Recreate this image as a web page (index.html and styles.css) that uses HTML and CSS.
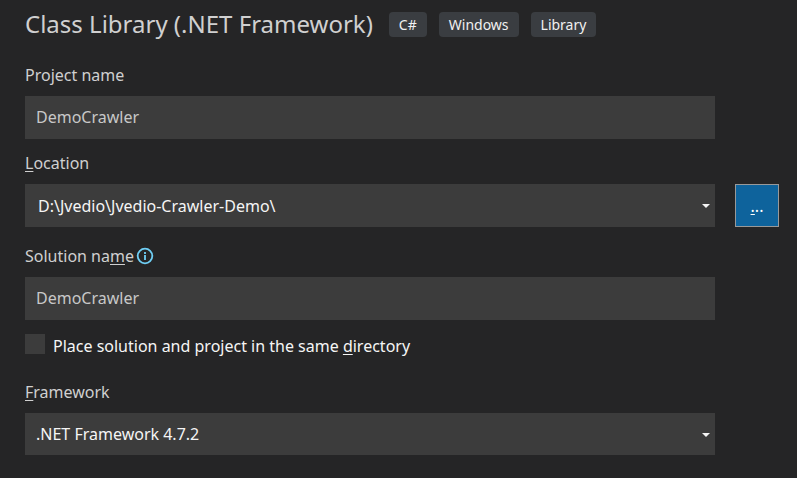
FILE: index.html
```html
<!DOCTYPE html>
<html lang="en">
<head>
<meta charset="utf-8">
<title>Configure your new project</title>
<link rel="stylesheet" href="styles.css">
</head>
<body>
<form class="project">
  <header class="heading">
    <h1 class="title">Class Library (.NET Framework)</h1>
    <ul class="tags">
      <li class="tag">C#</li>
      <li class="tag">Windows</li>
      <li class="tag">Library</li>
    </ul>
  </header>

  <div class="field">
    <label class="label" for="project-name">Project name</label>
    <input class="control" id="project-name" type="text" value="DemoCrawler">
  </div>

  <div class="field field-location">
    <label class="label" for="location"><u>L</u>ocation</label>
    <div class="row">
      <div class="picker">
        <select class="control control-path" id="location">
          <option>D:\Jvedio\Jvedio-Crawler-Demo\</option>
        </select>
        <svg class="arrow" viewBox="0 0 8 4" aria-hidden="true"><path d="M0 0h8L4 4z"/></svg>
      </div>
      <button class="browse" type="button"><u>.</u>..</button>
    </div>
  </div>

  <div class="field field-solution">
    <div class="label-row">
      <label class="label" for="solution-name">Solution na<u>m</u>e</label>
      <svg class="info" viewBox="0 0 18 18" aria-hidden="true">
        <circle cx="9" cy="9" r="7.3"/>
        <path d="M9 8v5M9 5v2"/>
      </svg>
    </div>
    <input class="control" id="solution-name" type="text" value="DemoCrawler">
  </div>

  <div class="check">
    <input class="box" id="same-directory" type="checkbox">
    <label class="check-label" for="same-directory">Place solution and project in the same <u>d</u>irectory</label>
  </div>

  <div class="field">
    <label class="label" for="framework"><u>F</u>ramework</label>
    <div class="picker">
      <select class="control control-bright" id="framework">
        <option>.NET Framework 4.7.2</option>
      </select>
      <svg class="arrow" viewBox="0 0 8 4" aria-hidden="true"><path d="M0 0h8L4 4z"/></svg>
    </div>
  </div>
</form>
</body>
</html>
```
FILE: styles.css
```css
* {
  box-sizing: border-box;
}

body {
  margin: 0;
  background: #252526;
  color: #d0d0d0;
  font: 16px/22px "Noto Sans", "Open Sans", sans-serif;
}

u {
  text-decoration-thickness: 1px;
  text-underline-offset: 2px;
}

.project {
  padding: 7px 82px 0 25px;
}

.heading {
  display: flex;
  align-items: center;
  gap: 16px;
  margin-bottom: 23px;
}

.title {
  margin: 0;
  font-size: 24px;
  font-weight: 400;
  line-height: 34px;
  white-space: nowrap;
}

.tags {
  display: flex;
  gap: 12px;
  margin: 0;
  padding: 0;
  list-style: none;
}

.tag {
  padding: 2px 10px;
  border-radius: 4px;
  background: #3a3d41;
  color: #f0f0f0;
  font-size: 14px;
  line-height: 21px;
}

.field {
  margin-bottom: 13px;
}

.field-location {
  margin-bottom: 18px;
}

.field-solution {
  margin-bottom: 14px;
}

.label,
.label-row {
  display: block;
  height: 22px;
  margin-bottom: 10px;
}

.label-row {
  display: flex;
  align-items: center;
  gap: 2px;
}

.label-row .label {
  margin: 0;
}

.control {
  display: block;
  width: 100%;
  height: 43px;
  padding: 0 11px 1px;
  border: 0;
  border-radius: 0;
  background: #3c3c3c;
  color: #c8c8c8;
  font: inherit;
  appearance: none;
}

.control-path {
  padding: 0 13px;
  color: #f5f5f5;
}

.control-bright {
  height: 42px;
  padding: 0 11px;
  color: #f5f5f5;
}

.row {
  display: flex;
  position: relative;
}

.picker {
  flex: 1;
  position: relative;
}

.arrow {
  position: absolute;
  right: 5px;
  top: 20px;
  width: 8px;
  height: 4px;
  fill: #f5f5f5;
  pointer-events: none;
}

.browse {
  position: absolute;
  left: calc(100% + 20px);
  width: 44px;
  height: 43px;
  padding: 0;
  border: 1px solid #999;
  background: #0e639c;
  color: #fff;
  font: inherit;
}

.info {
  width: 18px;
  height: 18px;
  fill: none;
  stroke: #6fcff5;
  stroke-width: 1.8;
}

.check {
  display: flex;
  align-items: flex-start;
  gap: 8px;
  margin-bottom: 23px;
}

.box {
  width: 20px;
  height: 20px;
  margin: 0;
  background: #3c3c3c;
  appearance: none;
}

.check-label {
  color: #f5f5f5;
  line-height: 24px;
}
```
